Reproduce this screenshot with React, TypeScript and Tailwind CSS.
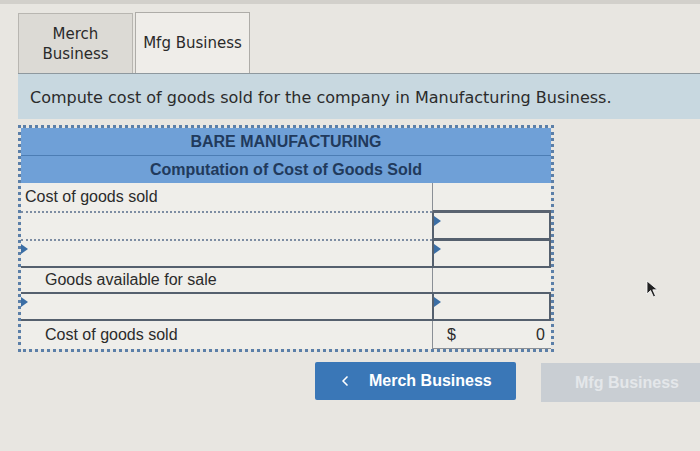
import { ChevronLeft } from 'lucide-react'

const tabFont = { fontFamily: '"DejaVu Sans", Verdana, sans-serif' }
const tableFont = { fontFamily: '"Liberation Sans", Arial, sans-serif' }

function Marker() {
  return <span className="absolute left-0 top-[3px] w-0 h-0 border-y-[5px] border-y-transparent border-l-[7px] border-l-[#3b6ea5]" />
}

function InputCell({ className = '' }: { className?: string }) {
  return (
    <div className={`relative w-[119px] border-l-2 border-[#55606e] ${className}`}>
      <Marker />
    </div>
  )
}

export default function App() {
  return (
    <div className="relative w-[700px] h-[451px] overflow-hidden bg-[#e8e6e1]" style={tabFont}>
      <div className="h-[4px] bg-[#d2d0cb]" />

      <div className="pl-[18px] pt-[8px]">
        <div className="flex items-end gap-[2px] text-[#2a2a2a] text-[15px]">
          <div className="w-[115px] h-[60px] border border-b-0 border-[#b8b6b1] bg-[#dcdad5] flex items-center justify-center text-center leading-[20px]">
            Merch
            <br />
            Business
          </div>
          <div className="w-[115px] h-[61px] border border-b-0 border-[#aeaca8] bg-[#efede9] flex items-center justify-center">
            Mfg Business
          </div>
        </div>
        <div className="h-[46px] border-t border-[#8e989e] bg-[#c8d8e0] pl-[12px] pt-[3px] flex items-center text-[16px] text-[#2b2b2b]">
          Compute cost of goods sold for the company in Manufacturing Business.
        </div>
      </div>

      <div className="ml-[18px] mt-[6px] w-[536px] border-[3px] border-dotted border-[#5b7fa8]" style={tableFont}>
        <div className="bg-[#6fa0d7] text-[#213a5c] font-bold text-[16px] text-center">
          <div className="h-[28px] flex items-center justify-center border-b border-[#4c7db4]">BARE MANUFACTURING</div>
          <div className="h-[27px] flex items-center justify-center">Computation of Cost of Goods Sold</div>
        </div>

        <div className="text-[16px] text-[#2b2b2b] bg-[#efeeea]">
          <div className="flex h-[30px]">
            <div className="flex-1 pl-[4px] flex items-center border-b-2 border-dotted border-[#7d8da3]">Cost of goods sold</div>
            <div className="w-[119px] border-l border-[#8a8f96] border-b-[3px] border-b-[#5a6370]" />
          </div>
          <div className="flex h-[28px]">
            <div className="flex-1 border-b-2 border-dotted border-[#7d8da3]" />
            <InputCell className="border-r-2 border-b-[3px]" />
          </div>
          <div className="flex h-[27px] border-b-2 border-[#55606e]">
            <div className="relative flex-1">
              <Marker />
            </div>
            <InputCell className="border-r-2" />
          </div>
          <div className="flex h-[26px] border-b-2 border-[#55606e]">
            <div className="flex-1 pl-[24px] flex items-center">Goods available for sale</div>
            <div className="w-[119px] border-l border-[#8a8f96]" />
          </div>
          <div className="flex h-[27px] border-b-2 border-[#55606e]">
            <div className="relative flex-1">
              <Marker />
            </div>
            <InputCell className="border-r-2" />
          </div>
          <div className="flex h-[28px]">
            <div className="flex-1 pl-[24px] flex items-center">Cost of goods sold</div>
            <div className="w-[119px] border-l border-b border-[#8a8f96] flex items-center justify-between pl-[14px] pr-[6px]">
              <span>$</span>
              <span>0</span>
            </div>
          </div>
        </div>
      </div>

      <div className="flex mt-[10px] ml-[315px] gap-[25px]" style={tableFont}>
        <button className="shrink-0 w-[201px] h-[38px] rounded-[2px] bg-[#3a77b7] text-white font-bold text-[16px] flex items-center pl-[22px] gap-[16px]">
          <ChevronLeft className="w-[16px] h-[16px]" strokeWidth={2.5} />
          Merch Business
        </button>
        <button className="shrink-0 w-[170px] h-[39px] mt-[1px] bg-[#c9ced3] text-[#e4e7ea] font-bold text-[16px] flex items-center pl-[34px]">
          Mfg Business
        </button>
      </div>

      <svg className="absolute left-[646px] top-[280px]" width="14" height="18" viewBox="0 0 14 18">
        <path d="M1 1 L1 14 L4.5 10.5 L7.5 17 L9.5 16 L6.8 9.8 L11.5 9.8 Z" fill="#222" stroke="#fff" strokeWidth="0.8" />
      </svg>
    </div>
  )
}
